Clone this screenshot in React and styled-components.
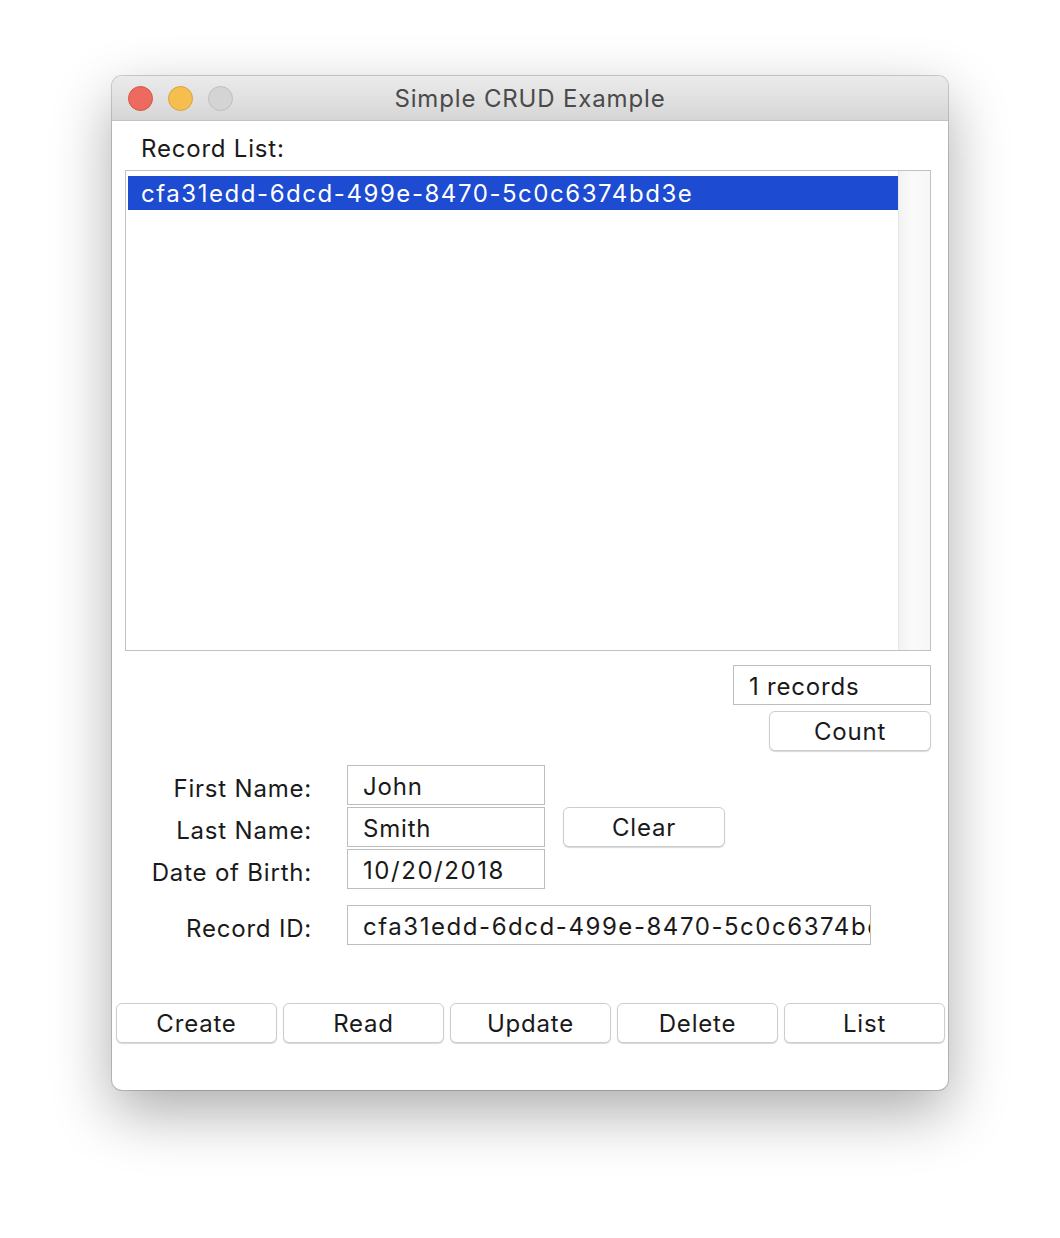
import React from 'react';
import styled, { createGlobalStyle } from 'styled-components';

const GlobalStyle = createGlobalStyle`
  html, body {
    margin: 0;
    padding: 0;
    background: #ffffff;
  }
  body {
    font-family: Inter, "Liberation Sans", Arial, sans-serif;
    letter-spacing: 0.8px;
    color: #1a1a1a;
  }
`;

const Page = styled.div`
  width: 1060px;
  height: 1238px;
  padding: 76px 0 0 112px;
  box-sizing: border-box;
`;

const Window = styled.div`
  width: 836px;
  height: 1014px;
  background: #ffffff;
  border-radius: 10px;
  box-shadow: 0 0 0 1px rgba(0, 0, 0, 0.18), 0 22px 60px rgba(0, 0, 0, 0.33);
  display: flex;
  flex-direction: column;
  overflow: hidden;
`;

const TitleBar = styled.div`
  height: 44px;
  flex: none;
  position: relative;
  display: flex;
  align-items: center;
  justify-content: center;
  background: linear-gradient(#ebebeb, #d6d6d6);
  border-bottom: 1px solid #c3c3c3;
  font-size: 24px;
  letter-spacing: 0.85px;
  color: #4a4a4a;
`;

const Lights = styled.div`
  position: absolute;
  left: 16px;
  top: 10px;
  display: flex;
  gap: 15px;
`;

const Light = styled.span`
  width: 23px;
  height: 23px;
  border-radius: 50%;
  background: ${(p) => p.$fill};
  border: 1px solid ${(p) => p.$edge};
`;

const Body = styled.div`
  flex: 1;
  display: flex;
  flex-direction: column;
  padding: 13px 17px 0 13px;
`;

const ListLabel = styled.div`
  font-size: 24px;
  line-height: 30px;
  padding-left: 16px;
  margin-bottom: 6px;
`;

const ListBox = styled.div`
  height: 481px;
  border: 1px solid #c2c2c2;
  box-sizing: border-box;
  display: flex;
  padding: 5px 0 0 2px;
`;

const ListItems = styled.div`
  flex: 1;
`;

const Row = styled.div`
  height: 34px;
  display: flex;
  align-items: center;
  padding-left: 13px;
  font-size: 24px;
  letter-spacing: ${(p) => (p.$wide ? '1.55px' : 'inherit')};
  background: ${(p) => (p.$selected ? '#1d4bd1' : 'transparent')};
  color: ${(p) => (p.$selected ? '#ffffff' : '#1a1a1a')};
`;

const Scroll = styled.div`
  width: 31px;
  margin-top: -5px;
  background: linear-gradient(90deg, #f2f2f2, #fafafa 40%, #f7f7f7);
  border-left: 1px solid #e6e6e6;
`;

const CountArea = styled.div`
  display: flex;
  flex-direction: column;
  align-items: flex-end;
  gap: 6px;
  margin-top: 14px;
`;

const Field = styled.div`
  width: ${(p) => p.$w}px;
  height: 40px;
  box-sizing: border-box;
  border: 1px solid #bdbdbd;
  display: flex;
  align-items: center;
  padding: 3px 0 0 15px;
  font-size: 24px;
  letter-spacing: ${(p) => (p.$wide ? '1.55px' : 'inherit')};
  white-space: nowrap;
  overflow: hidden;
`;

const Button = styled.button`
  width: ${(p) => p.$w || 161}px;
  height: 40px;
  box-sizing: border-box;
  background: #ffffff;
  border: 1px solid #cdcdcd;
  border-radius: 6px;
  box-shadow: 0 1px 1px rgba(0, 0, 0, 0.16);
  font-family: inherit;
  letter-spacing: inherit;
  font-size: 24px;
  color: #1a1a1a;
  padding: 0;
`;

const Form = styled.div`
  display: grid;
  grid-template-columns: 187px 198px auto;
  grid-template-rows: 40px 40px 40px 54px;
  column-gap: 35px;
  row-gap: 2px;
  margin-top: 14px;
  align-items: end;
`;

const Label = styled.div`
  font-size: 24px;
  line-height: 40px;
  height: 40px;
  text-align: right;
  grid-column: 1;
  padding-top: 4px;
  box-sizing: border-box;
  white-space: nowrap;
`;

const ClearCell = styled.div`
  grid-column: 3;
  grid-row: 2;
  margin-left: -17px;
`;

const IdRow = styled.div`
  grid-column: 2 / span 2;
  grid-row: 4;
`;

const Actions = styled.div`
  display: grid;
  grid-template-columns: repeat(5, 161px);
  column-gap: 6px;
  margin: 58px 0 0 -9px;
`;

export default function App() {
  const id = 'cfa31edd-6dcd-499e-8470-5c0c6374bd3e';
  return (
    <>
      <GlobalStyle />
      <Page>
        <Window>
          <TitleBar>
            <Lights>
              <Light $fill="#ed6a5e" $edge="#d55548" />
              <Light $fill="#f5bf4f" $edge="#d8a23f" />
              <Light $fill="#d4d4d4" $edge="#bebebe" />
            </Lights>
            Simple CRUD Example
          </TitleBar>
          <Body>
            <ListLabel>Record List:</ListLabel>
            <ListBox>
              <ListItems>
                <Row $selected $wide>{id}</Row>
              </ListItems>
              <Scroll />
            </ListBox>
            <CountArea>
              <Field $w={198}>1 records</Field>
              <Button $w={162}>Count</Button>
            </CountArea>
            <Form>
              <Label style={{ gridRow: 1 }}>First Name:</Label>
              <Field $w={198} style={{ gridColumn: 2, gridRow: 1 }}>John</Field>
              <Label style={{ gridRow: 2 }}>Last Name:</Label>
              <Field $w={198} style={{ gridColumn: 2, gridRow: 2 }}>Smith</Field>
              <ClearCell>
                <Button $w={162}>Clear</Button>
              </ClearCell>
              <Label style={{ gridRow: 3 }}>Date of Birth:</Label>
              <Field $w={198} $wide style={{ gridColumn: 2, gridRow: 3 }}>10/20/2018</Field>
              <Label style={{ gridRow: 4 }}>Record ID:</Label>
              <IdRow>
                <Field $w={524} $wide>{id}</Field>
              </IdRow>
            </Form>
            <Actions>
              <Button>Create</Button>
              <Button>Read</Button>
              <Button>Update</Button>
              <Button>Delete</Button>
              <Button>List</Button>
            </Actions>
          </Body>
        </Window>
      </Page>
    </>
  );
}
